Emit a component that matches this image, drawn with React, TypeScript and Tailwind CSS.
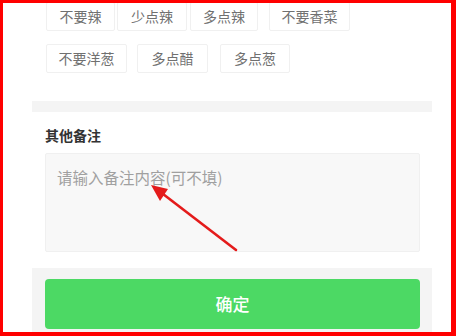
import React from 'react';

const font = { fontFamily: '"Noto Sans CJK SC", "Noto Sans", sans-serif' };

// 口味标签（第一行间距不均匀，按原图还原）
const rowOne = [
  { text: '不要辣', cls: 'w-[69px]' },
  { text: '少点辣', cls: 'w-[70px] ml-[2px]' },
  { text: '多点辣', cls: 'w-[68px] ml-[3px]' },
  { text: '不要香菜', cls: 'w-[81px] ml-[11px]' },
];

const rowTwo = [
  { text: '不要洋葱', cls: 'w-[81px]' },
  { text: '多点醋', cls: 'w-[71px] ml-[10px]' },
  { text: '多点葱', cls: 'w-[70px] ml-[12px]' },
];

function Tag({ text, cls }: { text: string; cls: string }) {
  return (
    <span
      className={`flex h-[29px] items-center justify-center rounded-[2px] border border-[#f0f0f0] bg-white text-[14px] text-[#707070] ${cls}`}
    >
      {text}
    </span>
  );
}

export default function App() {
  return (
    <div
      className="relative h-[336px] w-[456px] overflow-hidden border-b-4 border-l-[3px] border-r-[5px] border-t-[3px] border-[#f00] bg-white"
      style={font}
    >
      <div className="ml-[29px] w-[400px]">
        <div className="-mt-[1px] pb-[28px] pl-[14px]">
          <div className="flex">
            {rowOne.map((t) => (
              <Tag key={t.text} {...t} />
            ))}
          </div>
          <div className="mt-[13px] flex">
            {rowTwo.map((t) => (
              <Tag key={t.text} {...t} />
            ))}
          </div>
        </div>

        <div className="h-[11px] bg-[#f4f4f4]" />

        <div className="px-[13px] pb-[16px] pt-[13px] pr-[12px]">
          <div className="text-[14px] font-bold leading-[20px] text-[#333]">其他备注</div>
          <textarea
            placeholder="请输入备注内容(可不填)"
            className="mt-[8px] block h-[99px] w-full resize-none rounded-[2px] border border-[#f0f0f0] bg-[#f8f8f8] px-[11px] pt-[12px] text-[15.5px] leading-[22px] text-[#333] outline-none placeholder:text-[#a0a0a0]"
            style={font}
          />
        </div>

        <div className="h-[70px] bg-[#f4f4f4] pl-[13px] pr-[12px] pt-[11px]">
          <button
            type="button"
            className="flex h-[50px] w-full items-center justify-center rounded-[4px] bg-[#4cd964] text-[17px] font-medium text-white"
          >
            确定
          </button>
        </div>
      </div>

      {/* 红色标注箭头 */}
      <svg
        className="pointer-events-none absolute left-[-3px] top-[-3px]"
        width="456"
        height="336"
        viewBox="0 0 456 336"
      >
        <line x1="236" y1="250" x2="163" y2="194" stroke="#e41b1b" strokeWidth="2.6" strokeLinecap="round" />
        <polygon points="151,185 168,189 160,201" fill="#e41b1b" />
      </svg>
    </div>
  );
}
